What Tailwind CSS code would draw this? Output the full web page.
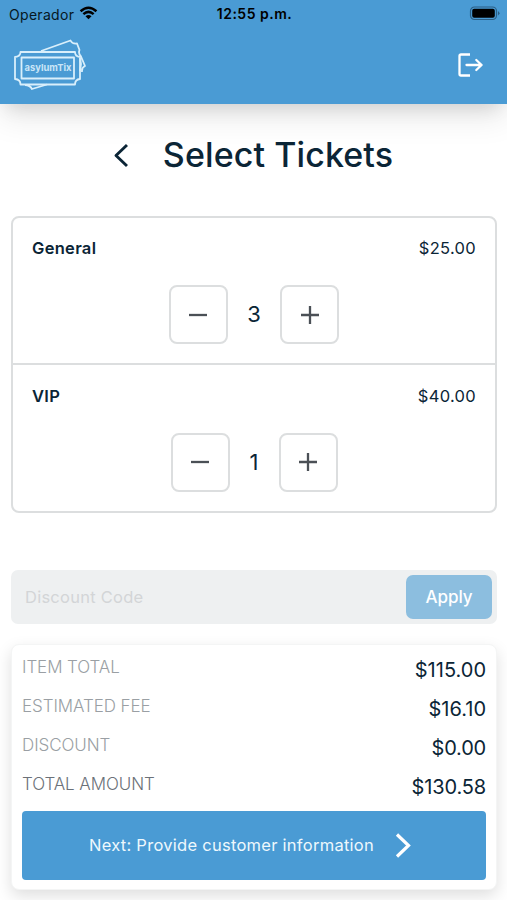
<!DOCTYPE html>
<html lang="en">
<head>
<meta charset="utf-8">
<title>Select Tickets</title>
<script src="https://cdn.jsdelivr.net/npm/@tailwindcss/browser@4"></script>
</head>
<body class="w-[507px] h-[900px] overflow-hidden bg-white font-['Inter',sans-serif] text-[#0b2536] flex flex-col">
  <header class="h-[103.500px] shrink-0 bg-[#4a9bd4] shadow-[0_10px_18px_-8px_rgba(0,0,0,0.14),0_14px_30px_rgba(0,0,0,0.09)]">
    <div class="h-[28px] grid grid-cols-3 items-center pl-[9px] pr-[7px] text-[14px] text-[#061722]">
      <div class="flex items-center gap-[5px]"><span class="tracking-[0.3px]">Operador</span>
        <svg class="w-[19px] h-[14px] -mt-[2px]" viewBox="0 0 20 15" fill="none" stroke="#000" stroke-width="2.6"><path d="M1.500 5.600Q10-2 18.500 5.600M4.500 8.800Q10 3.800 15.500 8.800"/><path d="M6.800 11.100Q10 8.300 13.200 11.100L10 14.300Z" fill="#000" stroke="none"/></svg>
      </div>
      <div class="text-center font-semibold whitespace-nowrap tracking-[0.5px] text-black -mt-[2px]">12:55 p.m.</div>
      <svg class="w-[31px] h-[15px] -mt-[2px] justify-self-end" viewBox="0 0 31 15"><rect x="1.500" y="1" width="26" height="12.500" rx="4" fill="none" stroke="#2b5f85" stroke-width="1.200"/><rect x="3.200" y="2.700" width="22.600" height="9.100" rx="2" fill="#000"/><path d="M29 5v4.500q3-2.200 0-4.500" fill="#2b5f85"/></svg>
    </div>
    <div class="h-[75px] flex items-center justify-between pl-[12px] pr-[23px]">
      <svg class="w-[74px] h-[54px] -mt-[1px]" viewBox="0 0 74 54" fill="none" stroke="#d9effb" stroke-width="1.800" stroke-linejoin="round">
        <path d="M29 13L58.500 2.500Q60 6 65 5.500L67.500 12q-1.500 3.500 1.500 6.500L73 28q-3.500 1.500-3 6M68 20l1 6-1 7M13 47q5 0 7 4l15-4.500"/>
        <path d="M8.500 14h54.500q0 4.500 5 5v22q-5 .5-5 5.500H8.500q0-5-5.500-5.500V19q5.500-.5 5.500-5Z"/>
        <rect x="9.500" y="19.500" width="52.500" height="21"/>
        <text x="36" y="33" text-anchor="middle" textLength="47" lengthAdjust="spacingAndGlyphs" font-family="Inter, sans-serif" font-size="9.500" font-weight="700" fill="#c9e5f7" stroke="none">asylumTix</text>
      </svg>
      <svg class="w-[27px] h-[26px] -mt-[2px]" viewBox="0 0 27 26" fill="none" stroke="#fff" stroke-width="2.300" stroke-linecap="round" stroke-linejoin="round"><path d="M13 2.500H4Q2.500 2.500 2.500 4v18q0 1.500 1.500 1.500h9" stroke-linecap="butt"/><path d="M9.500 13h15M19.300 8L24.600 13l-5.300 5"/></svg>
    </div>
  </header>

  <main class="px-[11px] pr-[10px] flex flex-col">
    <div class="h-[112px] pb-[9px] flex items-center justify-center gap-[33px] pr-[2px]">
      <svg class="w-[17px] h-[25px]" viewBox="0 0 17 25" fill="none" stroke="#0b2536" stroke-width="2.900" stroke-linejoin="round"><path d="M14 2L3 12.500l11 10.500"/></svg>
      <h1 class="text-[34px] leading-none font-medium tracking-[0.1px] whitespace-nowrap">Select Tickets</h1>
    </div>

    <section class="h-[297px] border-2 border-[#dcdedf] rounded-[8px] bg-white flex flex-col divide-y-2 divide-[#dcdedf]">
      <div class="flex-1 px-[19px] pt-[18.500px]">
        <div class="flex justify-between text-[16.500px] leading-[25px]"><span class="font-semibold tracking-[0.3px]">General</span><span class="tracking-[0.3px]">$25.00</span></div>
        <div class="mt-[24px] flex items-center justify-center">
          <button class="size-[59px] border-2 border-[#dcdedf] rounded-[8px] flex items-center justify-center"><svg class="size-[20px] -ml-[2px]" viewBox="0 0 20 20" stroke="#4b5056" stroke-width="2.300"><path d="M1 10h18"/></svg></button>
          <span class="w-[52px] text-center text-[22px]">3</span>
          <button class="size-[59px] border-2 border-[#dcdedf] rounded-[8px] flex items-center justify-center"><svg class="size-[20px]" viewBox="0 0 20 20" stroke="#4b5056" stroke-width="2.300"><path d="M1 10h18M10 1v18"/></svg></button>
        </div>
      </div>
      <div class="flex-1 px-[19px] pt-[18.500px]">
        <div class="flex justify-between text-[16.500px] leading-[25px]"><span class="font-semibold tracking-[0.3px]">VIP</span><span class="tracking-[0.3px]">$40.00</span></div>
        <div class="mt-[24px] flex items-center justify-center">
          <button class="size-[59px] border-2 border-[#dcdedf] rounded-[8px] flex items-center justify-center"><svg class="size-[20px] -ml-[1px]" viewBox="0 0 20 20" stroke="#4b5056" stroke-width="2.300"><path d="M1 10h18"/></svg></button>
          <span class="w-[49px] text-center text-[22px]">1</span>
          <button class="size-[59px] border-2 border-[#dcdedf] rounded-[8px] flex items-center justify-center"><svg class="size-[20px] -ml-[1px]" viewBox="0 0 20 20" stroke="#4b5056" stroke-width="2.300"><path d="M1 10h18M10 1v18"/></svg></button>
        </div>
      </div>
    </section>

    <div class="mt-[57.500px] h-[54px] rounded-[7px] bg-[#eef0f1] pl-[14px] pr-[5px] flex items-center justify-between">
      <span class="text-[16.500px] text-[#d3d5d7] tracking-[0.250px]">Discount Code</span>
      <button class="w-[86px] h-[44px] pt-[2px] rounded-[7px] bg-[#8cbedf] text-white text-[17px] font-medium">Apply</button>
    </div>

    <section class="mt-[20px] h-[246px] rounded-[8px] bg-white border border-[#f4f5f5] shadow-[0_6px_16px_rgba(0,0,0,0.13)] px-[10px] pt-[3px] flex flex-col">
      <div class="h-[39px] flex items-center justify-between"><span class="text-[17px] font-light text-[#9a9fa4] tracking-[-0.080px] mt-px">ITEM TOTAL</span><span class="text-[20px] mt-[5px]">$115.00</span></div>
      <div class="h-[39px] flex items-center justify-between"><span class="text-[17px] font-light text-[#9a9fa4] tracking-[-0.080px] mt-px">ESTIMATED FEE</span><span class="text-[20px] mt-[5px]">$16.10</span></div>
      <div class="h-[39px] flex items-center justify-between"><span class="text-[17px] font-light text-[#9a9fa4] tracking-[-0.080px] mt-px">DISCOUNT</span><span class="text-[20px] mt-[5px] tracking-[-0.200px]">$0.00</span></div>
      <div class="h-[39px] flex items-center justify-between"><span class="text-[17px] font-light text-[#6b7178] tracking-[-0.080px] mt-px">TOTAL AMOUNT</span><span class="text-[20px] mt-[5px] tracking-[-0.150px]">$130.58</span></div>
      <button class="mt-[7px] h-[69px] shrink-0 rounded-[4px] bg-[#4a9bd4] flex items-center justify-center gap-[21px] pr-[8px] text-[#eef8fd]">
        <span class="text-[16.500px] tracking-[0.270px] whitespace-nowrap">Next: Provide customer information</span>
        <svg class="w-[16px] h-[25px]" viewBox="0 0 16 25" fill="none" stroke="#fff" stroke-width="3.200"><path d="M2 1.500L13.500 12.500 2 23.500"/></svg>
      </button>
    </section>
  </main>
</body>
</html>
